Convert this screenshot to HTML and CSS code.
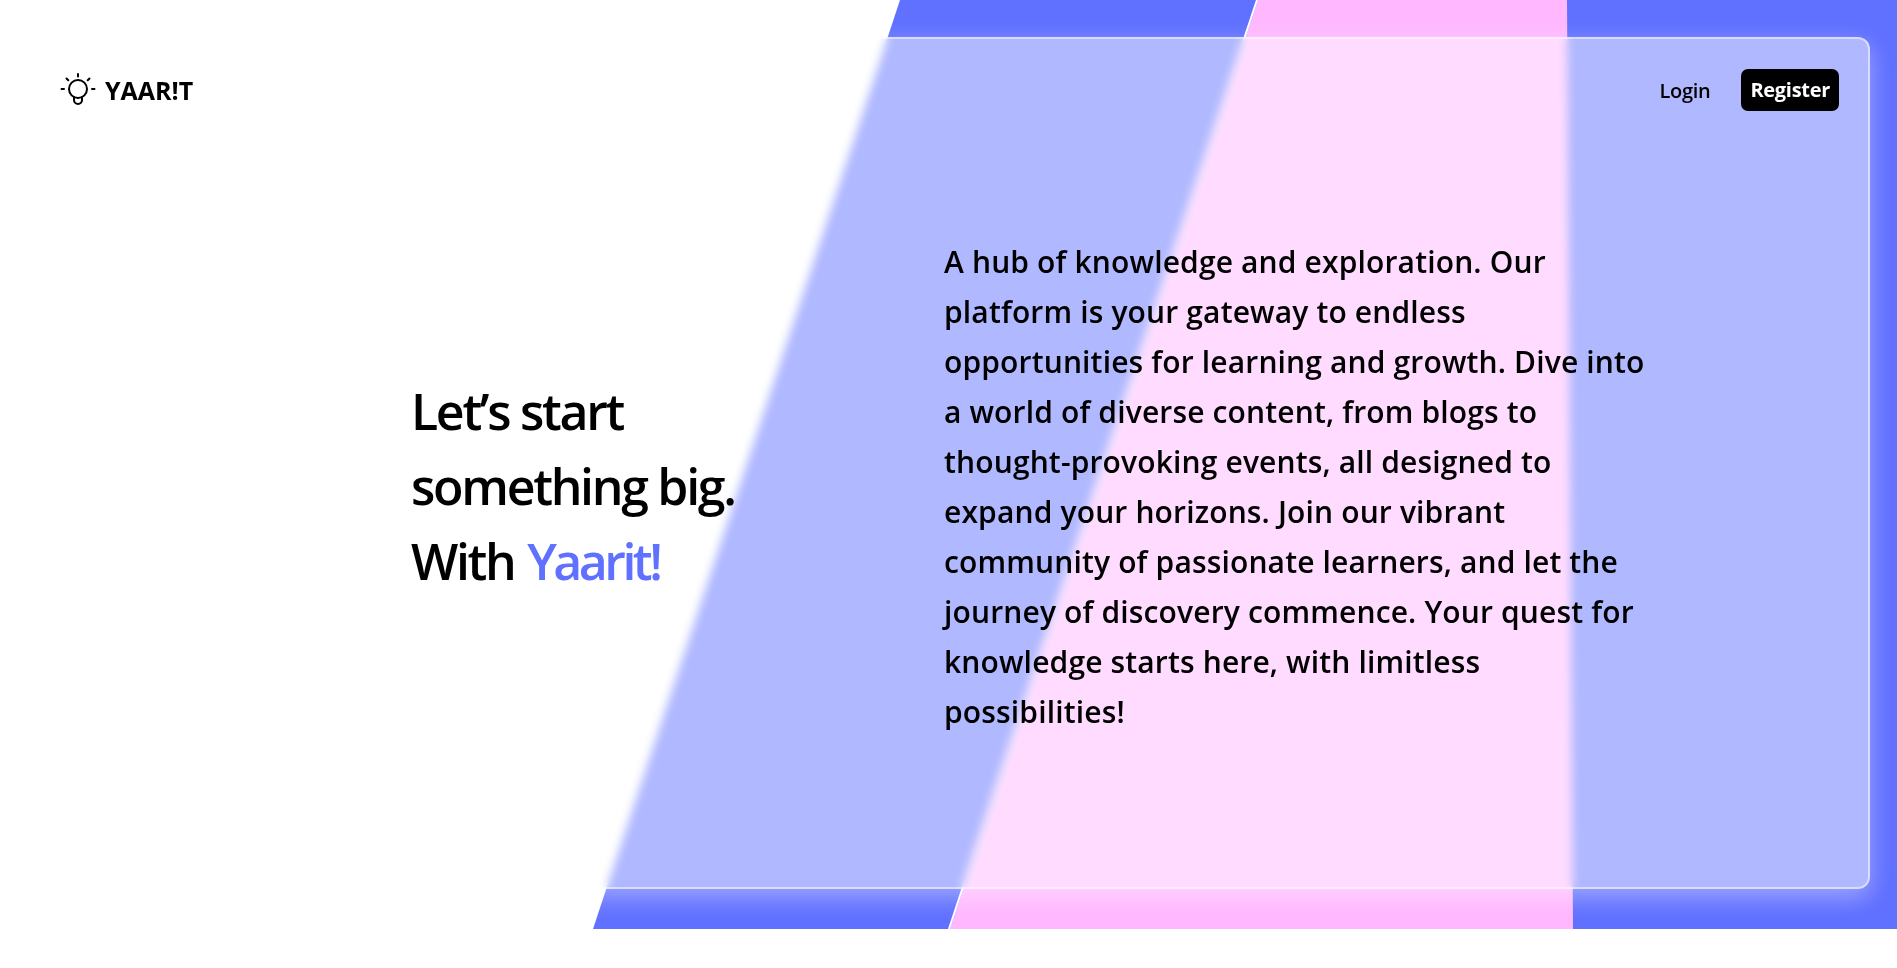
FILE: index.html
```html
<!DOCTYPE html>
<html lang="en">

<head>
    <meta charset="UTF-8">
    <meta name="viewport" content="width=device-width, initial-scale=1.0">
    <title>Yaarit</title>
    <link rel="stylesheet" href="styles.css">
</head>

<body>
    <div class="page">
        <!-- slanted colour bands behind the glass card -->
        <svg class="bands" viewBox="0 0 1897 929" preserveAspectRatio="none">
            <polygon class="band-blue" points="900,0 1897,0 1897,929 593,929"></polygon>
            <polygon class="band-pink" points="1258,0 1567,0 1573,929 950,929"></polygon>
            <line class="band-line" x1="1257" y1="0" x2="949" y2="929"></line>
        </svg>

        <div class="glass">
            <nav class="navbar">
                <a class="logo" href="#">
                    <svg class="logo-icon" viewBox="0 0 36 36" fill="none">
                        <circle cx="18" cy="17" r="9"></circle>
                        <path d="M14 25v3a4 4 0 0 0 8 0v-3"></path>
                        <path d="M18 2v2.500M6.500 6.500l1.800 1.800M29.500 6.500l-1.800 1.800M1.500 17h2.500M32 17h2.500"></path>
                    </svg>
                    <span>YAAR!T</span>
                </a>
                <div class="nav-links">
                    <a class="login" href="#">Login</a>
                    <a class="register" href="#">Register</a>
                </div>
            </nav>

            <main class="hero">
                <h1>Let’s start<br>something big.<br>With <span class="brand">Yaarit!</span></h1>
                <p>A hub of knowledge and exploration. Our<br>
                    platform is your gateway to endless<br>
                    opportunities for learning and growth. Dive into<br>
                    a world of diverse content, from blogs to<br>
                    thought-provoking events, all designed to<br>
                    expand your horizons. Join our vibrant<br>
                    community of passionate learners, and let the<br>
                    journey of discovery commence. Your quest for<br>
                    knowledge starts here, with limitless<br>
                    possibilities!</p>
            </main>
        </div>
    </div>
</body>

</html>
```

FILE: styles.css
```css
body {
    font-family: 'Open Sans', sans-serif;
    background-color: #ffffff;
    color: #000000;
    margin: 0;
    padding: 0;
}

a {
    color: inherit;
    text-decoration: none;
}

.page {
    position: relative;
    height: 968px;
    overflow: hidden;
    box-sizing: border-box;
    padding: 37px 27px 0 27px;
}

.bands {
    position: absolute;
    top: 0;
    left: 0;
    width: 1897px;
    height: 929px;
}

.band-blue {
    fill: #6070ff;
}

.band-pink {
    fill: #ffb8ff;
}

.band-line {
    stroke: #ffffff;
    stroke-width: 2;
}

.glass {
    position: relative;
    height: 852px;
    box-sizing: border-box;
    background-color: rgba(255, 255, 255, 0.5);
    backdrop-filter: blur(5px);
    border: 2px solid rgba(255, 255, 255, 0.5);
    border-radius: 12px;
    box-shadow: 0 8px 24px rgba(255, 255, 255, 0.4);
}

.navbar {
    display: flex;
    justify-content: space-between;
    align-items: center;
    height: 102px;
    padding: 0 29px 0 31px;
}

.logo {
    display: flex;
    align-items: center;
    gap: 9px;
    font-size: 25px;
    font-weight: 700;
}

.logo-icon {
    width: 36px;
    height: 36px;
    stroke: #000000;
    stroke-width: 2;
    stroke-linecap: round;
}

.nav-links {
    display: flex;
    align-items: center;
    gap: 31px;
    font-size: 20px;
    font-weight: 600;
}

.login {
    letter-spacing: -0.3px;
}

.register {
    background-color: #000000;
    color: #ffffff;
    font-weight: 700;
    letter-spacing: -0.3px;
    height: 42px;
    line-height: 42px;
    padding: 0 9px;
    border-radius: 7px;
}

.hero {
    display: flex;
    align-items: center;
    height: 692px;
    padding-left: 382px;
}

h1 {
    width: 533px;
    margin: 0 0 2px 0;
    font-size: 50px;
    font-weight: 600;
    line-height: 75px;
    letter-spacing: -2.3px;
}

.brand {
    color: #6070ff;
    margin-left: 2px;
    letter-spacing: -3.5px;
}

p {
    margin: 0;
    font-size: 30px;
    font-weight: 570;
    line-height: 50px;
    letter-spacing: 0.15px;
    white-space: nowrap;
}
```
